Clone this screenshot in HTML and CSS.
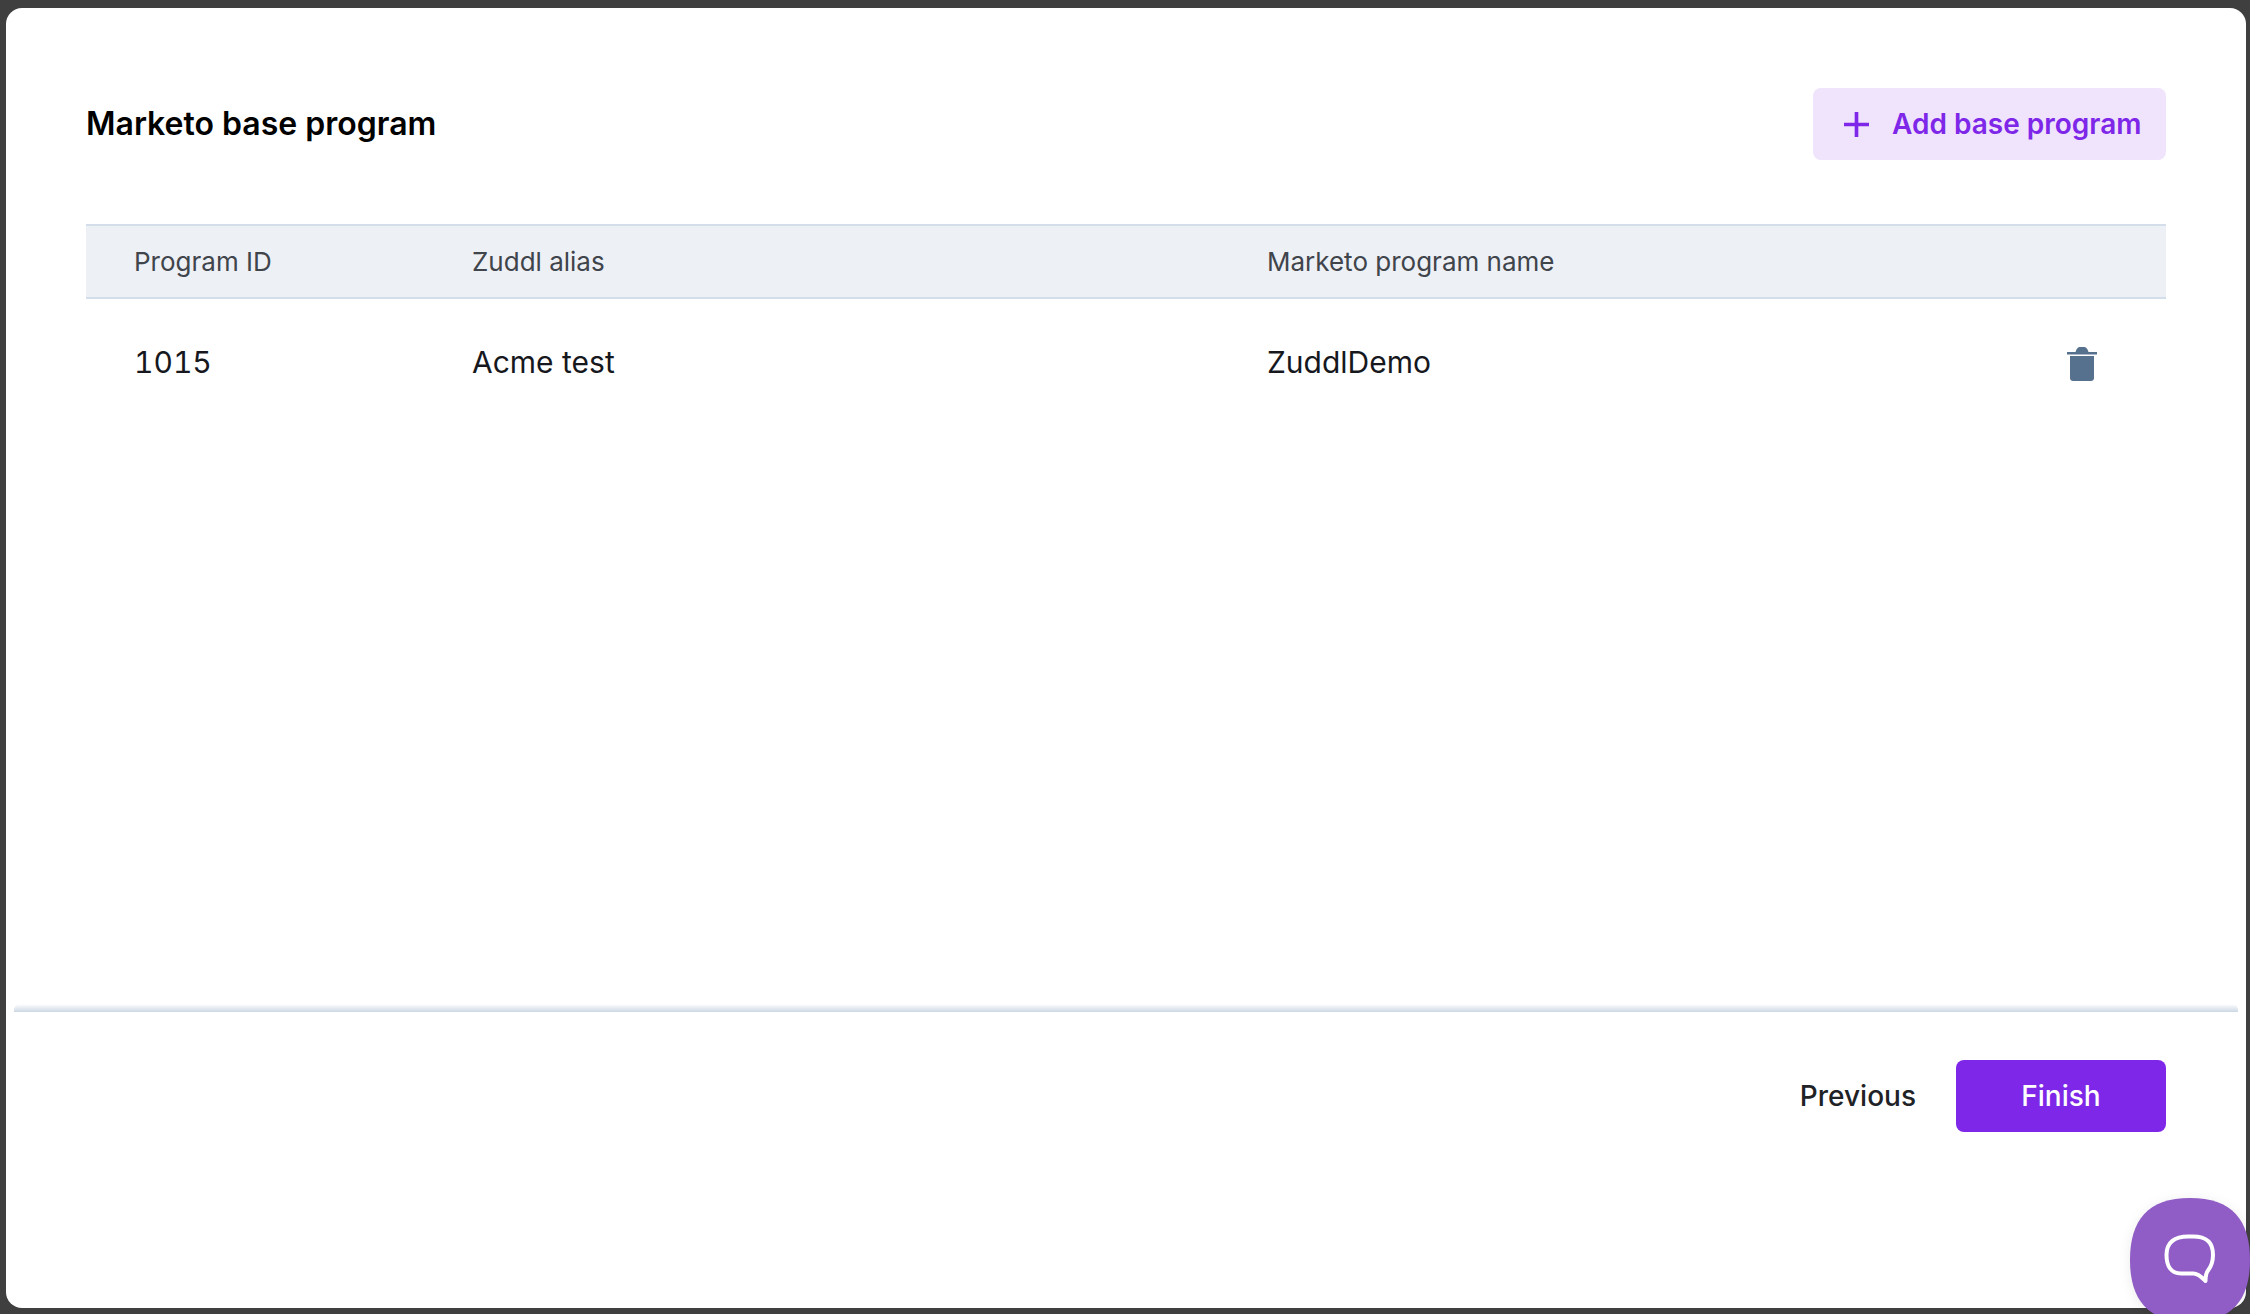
FILE: index.html
```html
<!DOCTYPE html>
<html lang="en">
<head>
<meta charset="utf-8">
<title>Marketo base program</title>
<link rel="stylesheet" href="styles.css">
</head>
<body>
<main class="card">
  <header class="top">
    <h1 class="title">Marketo base program</h1>
    <button class="btn btn-soft" type="button">
      <svg class="plus" viewBox="0 0 24 24" aria-hidden="true"><path d="M12 0v24M0 12h24"/></svg>
      <span>Add base program</span>
    </button>
  </header>
  <section class="table">
    <div class="row head">
      <div>Program ID</div>
      <div>Zuddl alias</div>
      <div>Marketo program name</div>
      <div></div>
    </div>
    <div class="row body-row">
      <div class="num">1015</div>
      <div>Acme test</div>
      <div>ZuddlDemo</div>
      <div class="act">
        <svg class="trash" viewBox="0 0 30 34" aria-hidden="true"><path d="M0 5h8.500C9.500 1.500 11 0 13 0h4c2 0 3.500 1.500 4.500 5H30v2.500H0z"/><path d="M3 9h24v22c0 1.700-1.300 3-3 3H6c-1.700 0-3-1.300-3-3z"/></svg>
      </div>
    </div>
  </section>
  <footer class="foot">
    <button class="btn btn-text" type="button">Previous</button>
    <button class="btn btn-primary" type="button">Finish</button>
  </footer>
</main>
<button class="chat" type="button" aria-label="Chat">
  <span class="chat-shape">
    <svg viewBox="0 0 52 50" aria-hidden="true"><path d="M24 2.500h5c11 0 20 3.500 20 18.500 0 6-1.500 11-5 15.500-2 2.500-2.500 6-2.500 10.500-3.500-3.500-7-7.500-12-7.500H17C7 39.500 2.500 32 2.500 21 2.500 8 11 2.500 24 2.500z"/></svg>
  </span>
</button>
</body>
</html>
```

FILE: styles.css
```css
* { box-sizing: border-box; }
html, body { height: 100%; }
body {
  margin: 0;
  padding: 8px 4px 6px 6px;
  background: #3f3f3f;
  font-family: Inter, "Liberation Sans", sans-serif;
  color: #16181d;
  overflow: hidden;
}
.card {
  position: relative;
  height: 100%;
  display: flex;
  flex-direction: column;
  background: #fff;
  border-radius: 16px;
}
.top {
  display: flex;
  justify-content: space-between;
  align-items: center;
  padding: 80px 80px 0 80px;
}
.title {
  margin: 0;
  font-size: 32px;
  line-height: 72px;
  font-weight: 600;
  color: #000;
}
.btn {
  height: 72px;
  border: 0;
  border-radius: 8px;
  font-family: inherit;
  font-size: 28px;
  font-weight: 500;
  display: inline-flex;
  align-items: center;
  justify-content: center;
}
.btn-soft {
  width: 353px;
  gap: 23px;
  background: #efe4fc;
  color: #7e27e8;
  font-weight: 600;
  justify-content: flex-start;
  padding-left: 31px;
}
.plus {
  width: 25px;
  height: 25px;
  fill: none;
  stroke: #7e27e8;
  stroke-width: 3.5;
}
.table {
  margin: 64px 80px 0;
  flex: 1;
}
.row {
  display: grid;
  grid-template-columns: 338px 795px 1fr 100px;
  padding-left: 48px;
  align-items: center;
}
.head {
  height: 75px;
  background: #edf0f5;
  border-top: 2px solid #d3deea;
  border-bottom: 2px solid #d3deea;
  font-size: 26px;
  color: #40444b;
}
.body-row {
  height: 126px;
  font-size: 30px;
}
.num { font-variant-numeric: tabular-nums; }
.act { display: flex; justify-content: flex-start; padding-left: 1px; }
.trash { width: 30px; height: 34px; fill: #56718d; margin-top: 4px; }
.foot {
  display: flex;
  justify-content: flex-end;
  align-items: flex-start;
  gap: 40px;
  height: 298px;
  padding: 50px 80px 0;
  position: relative;
  flex: none;
}
.foot::before {
  content: "";
  position: absolute;
  left: 8px;
  right: 8px;
  top: -6px;
  height: 8px;
  background: linear-gradient(to bottom, rgba(211,222,234,0), #ccd7e4);
  border-radius: 6px 6px 0 0;
}
.btn-text { background: none; color: #202226; padding: 0; }
.btn-primary { width: 210px; background: #7e27e8; color: #fff; }
.chat {
  position: fixed;
  left: 2130px;
  top: 1198px;
  width: 120px;
  height: 124px;
  padding: 0;
  border: 0;
  background: none;
  filter: drop-shadow(0 2px 6px rgba(0,0,0,0.08));
}
.chat-shape {
  width: 100%;
  height: 100%;
  background: #905cc5;
  clip-path: path("M60 0C102 0 120 22 120 62C120 102 102 124 60 124C18 124 0 102 0 62C0 22 18 0 60 0Z");
  display: flex;
  align-items: center;
  justify-content: center;
}
.chat svg {
  width: 52px;
  height: 50px;
  fill: none;
  stroke: #fff;
  stroke-width: 4;
  stroke-linejoin: round;
  margin-top: -2px;
}
```
